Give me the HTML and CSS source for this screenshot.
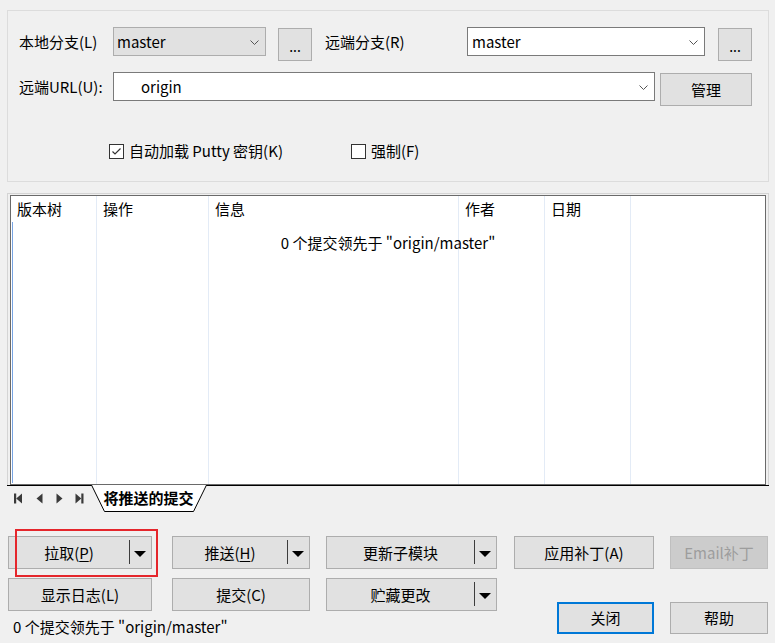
FILE: index.html
```html
<!DOCTYPE html>
<html lang="zh-CN">
<head>
<meta charset="utf-8">
<title>推送</title>
<link rel="stylesheet" href="styles.css">
</head>
<body>
<div class="dialog">
  <div class="group">
    <div class="row row1">
      <div class="lbl lbl-left">本地分支(L)</div>
      <div class="combo combo-gray w-local"><span class="ctext">master</span><svg class="chev" width="9" height="5" viewBox="0 0 9 5"><polyline points="0.5,0.5 4.5,4.5 8.5,0.5" fill="none" stroke="#555" stroke-width="1"/></svg></div>
      <div class="btn dots first-dots">...</div>
      <div class="lbl lbl-remote">远端分支(R)</div>
      <div class="combo w-remote"><span class="ctext">master</span><svg class="chev" width="9" height="5" viewBox="0 0 9 5"><polyline points="0.5,0.5 4.5,4.5 8.5,0.5" fill="none" stroke="#555" stroke-width="1"/></svg></div>
      <div class="btn dots second-dots">...</div>
    </div>
    <div class="row row2">
      <div class="lbl lbl-left">远端URL(U):</div>
      <div class="combo w-url"><span class="ctext url-text">origin</span><svg class="chev" width="9" height="5" viewBox="0 0 9 5"><polyline points="0.5,0.5 4.5,4.5 8.5,0.5" fill="none" stroke="#555" stroke-width="1"/></svg></div>
      <div class="btn manage">管理</div>
    </div>
    <div class="row row3">
      <div class="check-item first-check">
        <span class="box"><svg width="13" height="13" viewBox="0 0 13 13"><polyline points="2.5,6.5 5,9 10.5,3.5" fill="none" stroke="#333" stroke-width="1.2"/></svg></span>
        <span class="check-text">自动加载 Putty 密钥(K)</span>
      </div>
      <div class="check-item">
        <span class="box"></span>
        <span class="check-text">强制(F)</span>
      </div>
    </div>
  </div>

  <div class="list-outer">
    <div class="list">
      <div class="col c1"><div class="head">版本树</div></div>
      <div class="col c2"><div class="head">操作</div></div>
      <div class="col c3"><div class="head">信息</div></div>
      <div class="col c4"><div class="head">作者</div></div>
      <div class="col c5"><div class="head">日期</div></div>
      <div class="col c6"></div>
      <div class="focus-line"></div>
      <div class="empty-msg">0 个提交领先于 "origin/master"</div>
    </div>
  </div>

  <div class="tabstrip">
    <div class="nav">
      <svg class="nv1" width="10" height="11" viewBox="0 0 10 11"><rect x="0" y="0.5" width="2.2" height="10" fill="#3a3a3a"/><polygon points="8,0.5 8,10.5 2.2,5.5" fill="#3a3a3a"/></svg>
      <svg class="nv2" width="10" height="11" viewBox="0 0 10 11"><polygon points="7.5,0.5 7.5,10.5 1.5,5.5" fill="#3a3a3a"/></svg>
      <svg class="nv3" width="10" height="11" viewBox="0 0 10 11"><polygon points="0.5,0.5 0.5,10.5 6.5,5.5" fill="#3a3a3a"/></svg>
      <svg class="nv4" width="10" height="11" viewBox="0 0 10 11"><polygon points="0.5,0.5 0.5,10.5 6.3,5.5" fill="#3a3a3a"/><rect x="6.3" y="0.5" width="2.2" height="10" fill="#3a3a3a"/></svg>
    </div>
    <div class="tab">
      <svg class="tab-shape" width="117" height="27" viewBox="0 0 117 27"><polygon points="0.5,0 13.5,26.5 102.5,26.5 115.5,0" fill="#fff" stroke="none"/><polyline points="0.5,0 13.5,26.5 102.5,26.5 115.5,0" fill="none" stroke="#000" stroke-width="1"/></svg>
      <span class="tab-text">将推送的提交</span>
    </div>
  </div>

  <div class="actions">
    <div class="btn split a1"><span class="split-label">拉取(<u>P</u>)</span><span class="split-sep"></span><span class="split-arrow"></span></div>
    <div class="btn split a2"><span class="split-label">推送(<u>H</u>)</span><span class="split-sep"></span><span class="split-arrow"></span></div>
    <div class="btn split a3"><span class="split-label">更新子模块</span><span class="split-sep"></span><span class="split-arrow"></span></div>
    <div class="btn a4">应用补丁(A)</div>
    <div class="btn disabled a5">Email补丁</div>
    <div class="btn b1">显示日志(L)</div>
    <div class="btn b2">提交(C)</div>
    <div class="btn split b3"><span class="split-label">贮藏更改</span><span class="split-sep"></span><span class="split-arrow"></span></div>
    <div class="btn default close">关闭</div>
    <div class="btn help">帮助</div>
    <div class="status">0 个提交领先于 "origin/master"</div>
    <div class="highlight"></div>
  </div>
</div>
</body>
</html>
```

FILE: styles.css
```css
* { box-sizing: border-box; }

html, body {
  margin: 0;
  padding: 0;
  background: #f0f0f0;
}

body {
  width: 775px;
  height: 643px;
  overflow: hidden;
  font-family: "Noto Sans CJK SC", "Noto Sans", sans-serif;
  font-size: 15px;
  color: #000;
}

.dialog {
  width: 775px;
  height: 643px;
  display: flex;
  flex-direction: column;
}

/* ---------- top group ---------- */
.group {
  margin: 10px 6px 0 7px;
  height: 172px;
  border: 1px solid #dcdcdc;
  padding: 16px 0 0 11px;
}

.row {
  display: flex;
  align-items: flex-start;
}

.row2 { margin-top: 11px; }
.row3 { margin-top: 35px; padding-left: 90px; align-items: center; }

.lbl {
  height: 29px;
  line-height: 29px;
  white-space: nowrap;
}

.lbl-left { width: 94px; }
.lbl-remote { width: 142px; margin-left: 13px; }

.combo {
  height: 29px;
  border: 1px solid #7a7a7a;
  background: #fff;
  display: flex;
  align-items: center;
  justify-content: space-between;
  padding: 0 6px 0 3px;
}

.combo-gray {
  background: #e1e1e1;
  border-color: #adadad;
}

.ctext { line-height: 20px; }
.url-text { padding-left: 24px; }

.w-local { width: 153px; }
.w-remote { width: 238px; padding-left: 4px; }
.w-url { width: 542px; }

.chev { display: block; margin-top: 1px; }

.btn {
  background: #e1e1e1;
  border: 1px solid #adadad;
  display: flex;
  align-items: center;
  justify-content: center;
  line-height: 20px;
  white-space: nowrap;
}

.dots {
  width: 34px;
  height: 33px;
  margin-top: 1px;
  font-size: 14px;
  padding-top: 2px;
}

.first-dots { margin-left: 12px; }
.second-dots { margin-left: 13px; }

.manage {
  width: 92px;
  height: 33px;
  margin-left: 5px;
  margin-top: 1px;
}

.check-item {
  display: flex;
  align-items: center;
}

.first-check { width: 242px; }

.box {
  width: 15px;
  height: 15px;
  border: 1px solid #333;
  background: #fff;
  display: flex;
  align-items: center;
  justify-content: center;
}

.box svg { display: block; }

.check-text {
  margin-left: 5px;
  line-height: 20px;
}

/* ---------- list ---------- */
.list-outer {
  margin: 11px 6px 0 7px;
  border: 1px solid #d4d4d4;
  border-bottom: none;
  padding: 1px 2px 0 2px;
}

.list {
  position: relative;
  height: 290px;
  border: 1px solid #6a6a6a;
  background: #fff;
  display: flex;
}

.col {
  height: 100%;
  border-right: 1px solid #e3ebf6;
}

.c1 { width: 86px; }
.c2 { width: 112px; }
.c3 { width: 250px; }
.c4 { width: 86px; }
.c5 { width: 86px; }
.c6 { flex: 1; border-right: none; }

.head {
  height: 25px;
  line-height: 26px;
  padding-left: 6px;
  white-space: nowrap;
}

.focus-line {
  position: absolute;
  left: 1px;
  top: 26px;
  bottom: 1px;
  width: 1px;
  background: #78a4e2;
}

.empty-msg {
  position: absolute;
  left: 0;
  right: 0;
  top: 37px;
  text-align: center;
  line-height: 20px;
  white-space: nowrap;
}

/* ---------- tab strip ---------- */
.tabstrip {
  margin: 0 6px 0 7px;
  height: 27px;
  border-top: 1px solid #000;
  display: flex;
  align-items: flex-start;
}

.nav {
  display: flex;
  padding: 7px 0 0 7px;
  width: 84px;
}

.nav svg { display: block; }
.nv2 { margin-left: 11px; }
.nv3 { margin-left: 11px; }
.nv4 { margin-left: 9px; }

.tab {
  position: relative;
  margin-top: -1px;
  width: 117px;
  height: 27px;
  display: flex;
  align-items: center;
  justify-content: center;
}

.tab-shape {
  position: absolute;
  left: 0;
  top: 0;
}

.tab-text {
  position: relative;
  font-weight: bold;
  line-height: 20px;
  margin-top: -2px;
  margin-left: -2px;
}

/* ---------- bottom buttons ---------- */
.actions {
  position: relative;
  margin: 24px 0 0 8px;
  display: grid;
  grid-template-columns: 144px 158px 187px 157px 114px;
  grid-template-rows: 33px 33px 14px;
  row-gap: 9px;
}

.a1, .b1 { grid-column: 1; }
.a2, .b2 { grid-column: 2; margin-left: 20px; }
.a3, .b3 { grid-column: 3; margin-left: 16px; }
.a4 { grid-column: 4; margin-left: 17px; }
.a5 { grid-column: 5; margin-left: 16px; }

.a1, .a2, .a3, .a4, .a5 { grid-row: 1; }
.b1, .b2, .b3 { grid-row: 2; }

.split {
  justify-content: flex-start;
  align-items: stretch;
}

.split-label {
  flex: 1;
  display: flex;
  align-items: center;
  justify-content: center;
}

.split-sep {
  width: 1px;
  margin: 3px 0 4px;
  background: #3c3c3c;
}

.split-arrow {
  width: 21px;
  position: relative;
}

.split-arrow::after {
  content: "";
  position: absolute;
  left: 4px;
  top: 14px;
  border-left: 6px solid transparent;
  border-right: 6px solid transparent;
  border-top: 6px solid #000;
}

.split-label u {
  text-decoration: underline;
  text-underline-offset: 2px;
}

.disabled {
  background: #cccccc;
  border-color: #bfbfbf;
  color: #9d9d9d;
}

.close {
  grid-column: 4;
  grid-row: 2 / 4;
  margin-left: 60px;
  margin-top: 24px;
  height: 32px;
  width: 97px;
  justify-self: start;
  align-self: start;
}

.default {
  border: 2px solid #0078d7;
}

.help {
  grid-column: 5;
  grid-row: 2 / 4;
  margin-left: 16px;
  margin-top: 24px;
  height: 32px;
  align-self: start;
}

.status {
  grid-column: 1 / 4;
  grid-row: 3;
  padding-left: 5px;
  line-height: 14px;
  white-space: nowrap;
}

.highlight {
  position: absolute;
  left: 7px;
  top: -7px;
  width: 143px;
  height: 48px;
  border: 2px solid #e5262c;
  pointer-events: none;
}
```
